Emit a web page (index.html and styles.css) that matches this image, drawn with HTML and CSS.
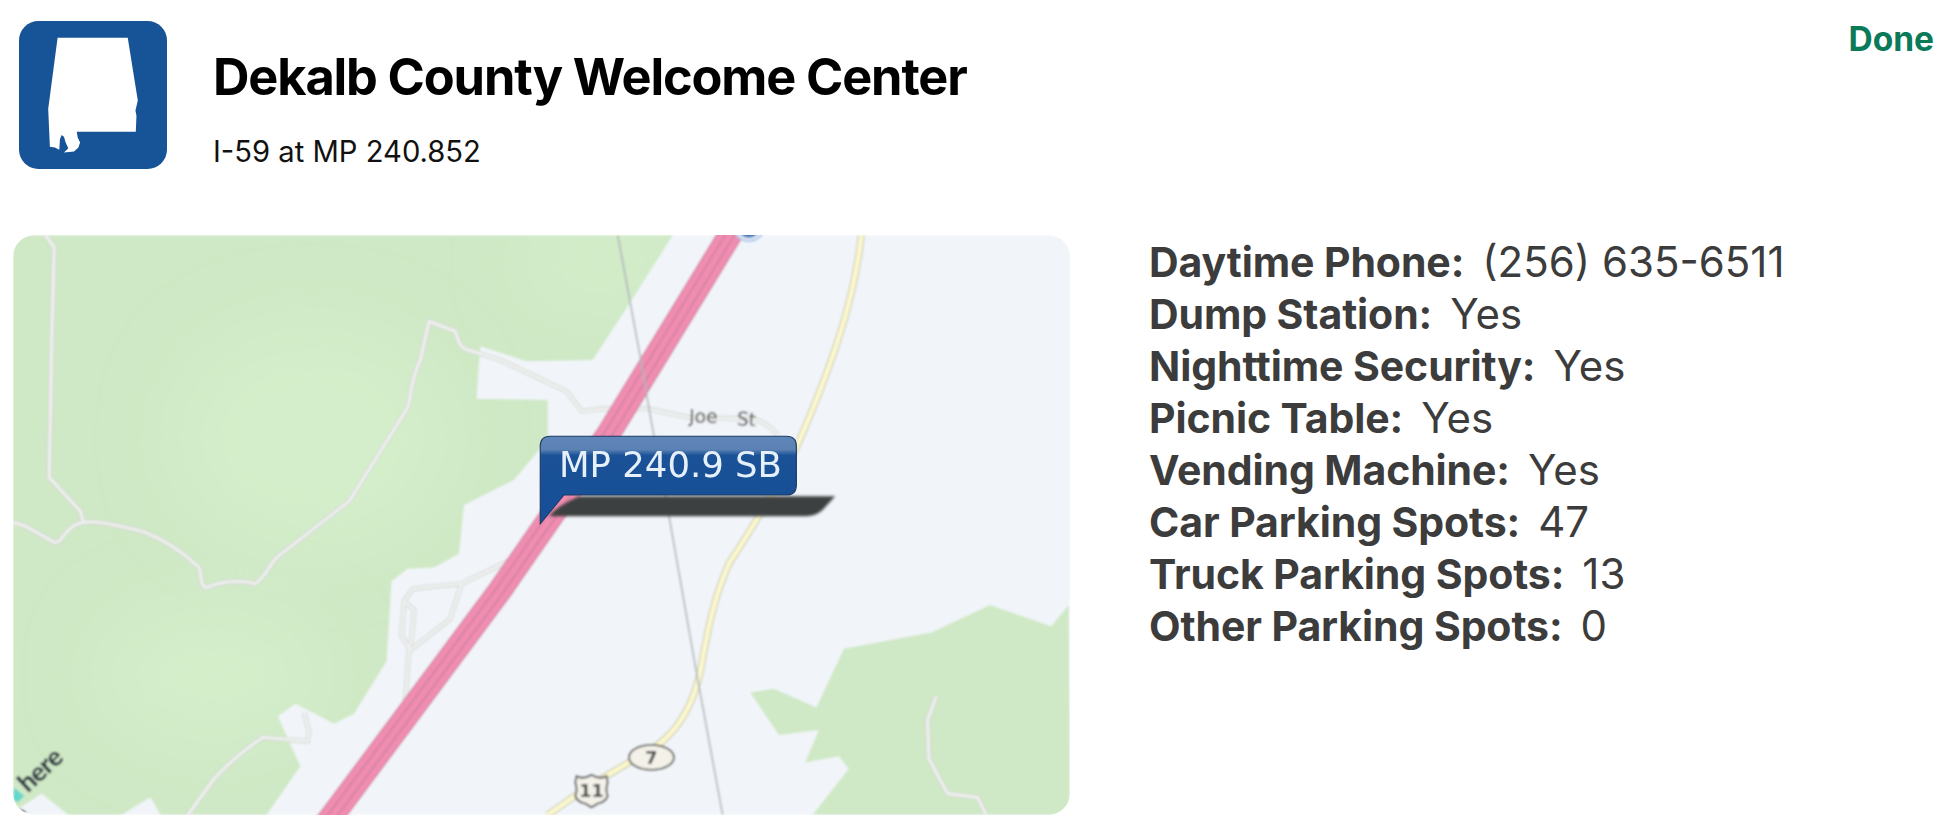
FILE: index.html
```html
<!DOCTYPE html>
<html lang="en">
<head>
    <meta charset="UTF-8">
    <meta name="viewport" content="width=device-width, initial-scale=1.0">
    <title>Dekalb County Welcome Center</title>
    <link rel="stylesheet" href="styles.css">
</head>
<body>
    <header class="header">
        <svg class="state-icon" viewBox="58 63 441 441">
            <rect x="58" y="63" width="441" height="441" rx="58" fill="#175397"/>
            <path fill="#fff" d="M173 113 L382 113 L412 300 L405 330 L408 345 L406 393 L230 393 L233 410 L240 425 L235 440 L222 452 L192 455 L205 442 L197 425 L192 408 L185 403 L180 415 L178 447 L165 440 L150 438 L145 325 Z"/>
        </svg>
        <div class="heading">
            <h1 class="title">Dekalb County Welcome Center</h1>
            <p class="subtitle">I-59 at MP 240.852</p>
        </div>
        <a class="done" href="#">Done</a>
    </header>

    <main class="content">
        <div class="map">
            <svg class="map-svg" viewBox="10 188 846 464">
                <defs>
                    <filter id="soft" x="-5%" y="-5%" width="110%" height="110%"><feGaussianBlur stdDeviation="0.7"/></filter>
                    <filter id="softer" x="-20%" y="-40%" width="140%" height="180%"><feGaussianBlur stdDeviation="1.2"/></filter>
                    <filter id="patch" x="-50%" y="-50%" width="200%" height="200%"><feGaussianBlur stdDeviation="28"/></filter>
                    <linearGradient id="bubble" x1="0" y1="0" x2="0" y2="1">
                        <stop offset="0" stop-color="#5f86b8"/>
                        <stop offset="0.15" stop-color="#5c82b4"/>
                        <stop offset="0.22" stop-color="#1a5197"/>
                        <stop offset="1" stop-color="#164f96"/>
                    </linearGradient>
                    <clipPath id="green-clip">
                        <path d="M10 188 L538 188 L504 242 L474 288 L421 289 L384 277 L381 319 L438 320 L438 351 L431 360 L411 384 L371 404 L367 443 L347 454 L326 455 L313 465 L309 529 L283 571 L267 579 L236 563 L222 573 L240 613 L213 652 L128 652 L120 638 L97 652 L54 652 L33 635 L10 650 Z"/>
                    </clipPath>
                </defs>

                <g filter="url(#soft)">
                    <rect x="10" y="188" width="846" height="464" fill="#f1f5f9"/>

                    <!-- green areas -->
                    <path class="land" d="M10 188 L538 188 L504 242 L474 288 L421 289 L384 277 L381 319 L438 320 L438 351 L431 360 L411 384 L371 404 L367 443 L347 454 L326 455 L313 465 L309 529 L283 571 L267 579 L236 563 L222 573 L240 613 L213 652 L128 652 L120 638 L97 652 L54 652 L33 635 L10 650 Z"/>
                    <path class="land" d="M855 484 L841 501 L792 484 L745 506 L675 519 L653 566 L619 551 L600 554 L623 588 L655 584 L644 610 L671 605 L679 615 L650 652 L856 652 Z"/>
                    <g clip-path="url(#green-clip)">
                        <ellipse class="patch" cx="250" cy="350" rx="110" ry="90"/>
                        <ellipse class="patch" cx="170" cy="540" rx="90" ry="55"/>
                        <ellipse class="patch" cx="480" cy="210" rx="60" ry="30"/>
                    </g>

                    <!-- minor roads -->
                    <g class="road-casing">
                        <path id="road-a" d="M36 188 L43 198 L41 270 L39 382 L64 409 L66 417"/>
                        <path id="road-b" d="M10 418 C18 419 24 423 43 434 C50 434 50 425 60 420 C70 415 85 418 113 425 C130 431 145 441 159 454 C161 462 160 470 165 470 C180 464 192 464 204 467 C212 462 215 452 221 446 L279 401 L326 326 C329 315 328 305 336 288 L343 257 L364 265 C367 272 366 278 375 280 L400 288 L453 313 L465 329 L483 327 L518 327 L551 334 L601 335 Q615 338 622 348"/>
                        <path id="road-c" d="M150 652 L171 623 Q190 603 210 590 L246 593 L247 585 L243 570"/>
                        <path id="road-d" d="M749 557 L742 576 L743 607 L758 635 L782 638 L789 652"/>
                        <path id="road-e" d="M406 449 L369 467 L330 471 L323 481 L321 509 L327 518 L324 562 M369 467 L360 495 L327 521 M323 481 L331 488 L329 512 L327 518"/>
                    </g>
                    <g class="road-fill">
                        <use href="#road-a"/>
                        <use href="#road-b"/>
                        <use href="#road-c"/>
                        <use href="#road-d"/>
                        <use href="#road-e"/>
                    </g>

                    <!-- us 11 / state 7 -->
                    <path class="yellow-casing" d="M689 188 C685 225 675 270 640 351 C625 385 600 425 583 451 C570 480 565 510 560 538 C555 560 545 585 520 600 L471 629 L438 652"/>
                    <path class="yellow-fill" d="M689 188 C685 225 675 270 640 351 C625 385 600 425 583 451 C570 480 565 510 560 538 C555 560 545 585 520 600 L471 629 L438 652"/>

                    <!-- interstate -->
                    <path class="hwy hwy-edge" d="M252 671 L400 472 L486 348 L596 168"/>
                    <path class="hwy hwy-base" d="M252 671 L400 472 L486 348 L596 168"/>
                    <path class="hwy hwy-stripes" d="M252 671 L400 472 L486 348 L596 168"/>
                    <path class="hwy hwy-mid" d="M252 671 L400 472 L486 348 L596 168"/>
                    <circle cx="599" cy="180" r="13.5" fill="#a9c6e6"/>
                    <circle cx="599" cy="180" r="12" fill="#e6eef7"/>
                    <circle cx="599" cy="180" r="10" fill="#3f79bd"/>

                    <path class="rail" d="M494 188 L512 285 L521 338 L533 401 L557 538 L578 652"/>

                    <text class="street" x="551" y="338" transform="rotate(1 551 338)">Joe</text>
                    <text class="street" x="589" y="340" transform="rotate(4 589 340)">St</text>

                    <ellipse class="badge" cx="521" cy="606" rx="18" ry="10"/>
                    <text class="badge-text" x="521" y="611">7</text>
                    <path class="badge" d="M461 621 Q466 624 473 620 Q480 624 485 621 L486 626 Q484 632 486 637 Q484 642 478 643 L473 646 L468 643 Q462 642 460 637 Q462 632 460 626 Z"/>
                    <text class="badge-text" x="473" y="638">11</text>

                    <path class="here-mark" d="M11 630 L19 637 L14 642 L10 640 Z"/>
                    <text class="here" x="22" y="635" transform="rotate(-43 22 635)">here</text>
                    <path d="M11 650 Q15 645 21 650 L15 652 Z" fill="#4a4f55"/>
                </g>

                <!-- marker -->
                <path d="M463 397 L668 397 L658 408 Q652 413 645 413 L439 413 Q445 405 463 397 Z" fill="#3d3f3f" filter="url(#softer)"/>
                <path d="M440 349 L629 349 Q637 349 637 357 L637 388 Q637 396 629 396 L451 396 L432 419 L432 357 Q432 349 440 349 Z" fill="url(#bubble)" stroke="#1d3a63" stroke-width="0.9"/>
                <text class="marker-text" x="447" y="381.5">MP 240.9 SB</text>
            </svg>
        </div>

        <dl class="details">
            <div class="row"><dt>Daytime Phone:</dt><dd>(256) 635-6511</dd></div>
            <div class="row"><dt>Dump Station:</dt><dd>Yes</dd></div>
            <div class="row"><dt>Nighttime Security:</dt><dd>Yes</dd></div>
            <div class="row"><dt>Picnic Table:</dt><dd>Yes</dd></div>
            <div class="row"><dt>Vending Machine:</dt><dd>Yes</dd></div>
            <div class="row"><dt>Car Parking Spots:</dt><dd>47</dd></div>
            <div class="row"><dt>Truck Parking Spots:</dt><dd>13</dd></div>
            <div class="row"><dt>Other Parking Spots:</dt><dd>0</dd></div>
        </dl>
    </main>
</body>
</html>
```

FILE: styles.css
```css
body {
    margin: 0;
    background: #fff;
    font-family: Inter, "Liberation Sans", sans-serif;
    overflow: hidden;
}
.header {
    display: flex;
    align-items: flex-start;
    padding: 21px 26px 0 19px;
}
.state-icon {
    width: 148px;
    height: 148px;
    flex: none;
}
.heading {
    margin-left: 46px;
    padding-top: 27px;
}
.title {
    margin: 0;
    font-size: 50.5px;
    line-height: 58px;
    font-weight: 700;
    letter-spacing: -1.15px;
    color: #000;
}
.subtitle {
    margin: 30px 0 0;
    font-size: 29.2px;
    line-height: 32px;
    color: #111;
}
.done {
    margin-left: auto;
    margin-top: -2px;
    font-size: 33.5px;
    line-height: 40px;
    font-weight: 700;
    color: #0a7a58;
    text-decoration: none;
}
.content {
    display: flex;
    gap: 79px;
    margin-top: 66px;
    padding-left: 13px;
}
.map {
    width: 1057px;
    height: 580px;
    border-radius: 22px;
    overflow: hidden;
    flex: none;
}
.map-svg {
    display: block;
    width: 100%;
    height: 100%;
}
.land {
    fill: #cfe8c5;
}
.patch {
    fill: #d4eecb;
    filter: url(#patch);
}
.road-casing {
    fill: none;
    stroke: #d6d9d5;
    stroke-width: 4;
    stroke-linejoin: round;
}
.road-fill {
    fill: none;
    stroke: #f0f2f1;
    stroke-width: 2.2;
    stroke-linejoin: round;
}
.yellow-casing {
    fill: none;
    stroke: #c4c4a6;
    stroke-width: 5.6;
    stroke-linejoin: round;
}
.yellow-fill {
    fill: none;
    stroke: #fbf8cf;
    stroke-width: 4;
    stroke-linejoin: round;
}
.hwy {
    fill: none;
    stroke-linejoin: round;
}
.hwy-edge {
    stroke: #cf7fa1;
    stroke-width: 19.5;
}
.hwy-base {
    stroke: #f08db0;
    stroke-width: 17.6;
}
.hwy-stripes {
    stroke: #cf7fa1;
    stroke-width: 7.6;
}
.hwy-mid {
    stroke: #f08db0;
    stroke-width: 5.2;
}
.rail {
    fill: none;
    stroke: #b1b5b9;
    stroke-width: 1.3;
}
.street {
    font-family: "DejaVu Sans", sans-serif;
    font-size: 15px;
    fill: #4c4c4c;
}
.badge {
    fill: #f3f1e8;
    stroke: #5a5a58;
    stroke-width: 1.5;
}
.badge-text {
    font-family: "DejaVu Sans", sans-serif;
    font-size: 14px;
    font-weight: 700;
    fill: #444;
    text-anchor: middle;
}
.here {
    font-family: Lato, sans-serif;
    font-size: 21px;
    font-weight: 900;
    letter-spacing: -0.5px;
    fill: #2e3a44;
}
.here-mark {
    fill: #62d8cb;
}
.marker-text {
    font-family: "DejaVu Sans", sans-serif;
    font-size: 28.4px;
    fill: #e6f0fa;
}
.details {
    margin: 1px 0 0;
    color: #3c3c3c;
    font-size: 42px;
    line-height: 52px;
}
.row {
    display: flex;
    gap: 18px;
}
.row dt {
    font-size: 41px;
    font-weight: 700;
    letter-spacing: -0.1px;
}
.row dd {
    margin: 0;
}
```
